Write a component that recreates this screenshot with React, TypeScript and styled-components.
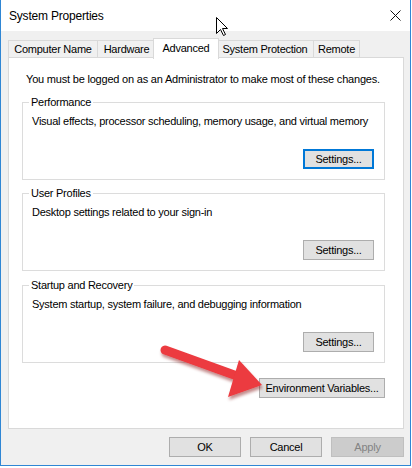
import React from 'react';
import styled, { createGlobalStyle } from 'styled-components';

const GlobalStyle = createGlobalStyle`
  html, body {
    margin: 0;
    padding: 0;
    background: #ffffff;
  }
  body {
    font-family: "Liberation Sans", Arial, sans-serif;
    font-size: 11px;
    color: #000;
  }
`;

const Window = styled.div`
  position: relative;
  box-sizing: border-box;
  width: 411px;
  height: 466px;
  border: 1px solid #2f86d4;
  border-top: none;
  display: flex;
  flex-direction: column;
  background: #f0f0f0;
`;

const TitleBar = styled.div`
  height: 31px;
  flex: none;
  background: #ffffff;
  display: flex;
  align-items: center;
  justify-content: space-between;
  padding: 0 0 0 8px;
`;

const Title = styled.span`
  font-size: 12px;
  letter-spacing: -0.2px;
`;

const CloseButton = styled.div`
  width: 30px;
  height: 31px;
  display: flex;
  align-items: center;
  justify-content: center;
`;

const Body = styled.div`
  flex: 1;
  display: flex;
  flex-direction: column;
  padding: 7px 6px 0 7px;
`;

const TabStrip = styled.div`
  display: flex;
  align-items: flex-end;
  height: 20px;
  position: relative;
  z-index: 1;
`;

const Tab = styled.div<{ $w: number; $active?: boolean; $first?: boolean }>`
  box-sizing: border-box;
  width: ${(p) => p.$w}px;
  height: ${(p) => (p.$active ? 21 : 18)}px;
  margin-left: ${(p) => (p.$first ? 0 : p.$active ? -3 : -1)}px;
  margin-right: ${(p) => (p.$active ? -2 : 0)}px;
  margin-bottom: ${(p) => (p.$active ? -1 : 0)}px;
  border: 1px solid #d9d9d9;
  border-bottom: ${(p) => (p.$active ? 'none' : '1px solid #d9d9d9')};
  background: ${(p) => (p.$active ? '#ffffff' : '#f0f0f0')};
  position: relative;
  z-index: ${(p) => (p.$active ? 2 : 0)};
  display: flex;
  align-items: center;
  justify-content: center;
  padding-bottom: ${(p) => (p.$active ? 2 : 0)}px;
  white-space: nowrap;
  letter-spacing: -0.25px;
`;

const Panel = styled.div`
  box-sizing: border-box;
  height: 372px;
  margin-top: -1px;
  background: #ffffff;
  border: 1px solid #d9d9d9;
  padding: 14px 18px 0 13px;
  display: flex;
  flex-direction: column;
`;

const Intro = styled.div`
  line-height: 14px;
  margin-left: 4px;
  white-space: nowrap;
  letter-spacing: -0.2px;
`;

const Group = styled.fieldset<{ $gap: number }>`
  box-sizing: border-box;
  margin: ${(p) => p.$gap}px 0 0 0;
  padding: 5px 10px 10px 9px;
  height: 85px;
  border: 1px solid #dcdcdc;
  display: flex;
  flex-direction: column;
  min-inline-size: 0;
`;

const Legend = styled.legend`
  padding: 0 2px;
  margin-left: -3px;
  line-height: 14px;
  letter-spacing: -0.25px;
`;

const Desc = styled.div`
  line-height: 14px;
  white-space: nowrap;
  letter-spacing: -0.25px;
`;

const ButtonRow = styled.div<{ $top: number }>`
  display: flex;
  justify-content: flex-end;
  gap: 9px;
  margin-top: ${(p) => p.$top}px;
`;

const Button = styled.div<{ $w: number; $focused?: boolean; $disabled?: boolean }>`
  box-sizing: border-box;
  width: ${(p) => p.$w}px;
  height: 20px;
  display: flex;
  align-items: center;
  justify-content: center;
  background: ${(p) => (p.$disabled ? '#cccccc' : '#e1e1e1')};
  border: 1px solid ${(p) => (p.$focused ? '#0078d7' : p.$disabled ? '#bfbfbf' : '#adadad')};
  box-shadow: ${(p) => (p.$focused ? 'inset 0 0 0 1px #0078d7' : 'none')};
  color: ${(p) => (p.$disabled ? '#838383' : '#000')};
  white-space: nowrap;
  letter-spacing: -0.25px;
`;

const Footer = styled.div`
  display: flex;
  justify-content: flex-end;
  gap: 9px;
  margin-top: 8px;
`;

const Overlay = styled.svg`
  position: absolute;
  left: 0;
  top: 0;
  pointer-events: none;
  overflow: visible;
`;

const groups = [
  {
    title: 'Performance',
    text: 'Visual effects, processor scheduling, memory usage, and virtual memory',
    focused: true,
  },
  { title: 'User Profiles', text: 'Desktop settings related to your sign-in' },
  {
    title: 'Startup and Recovery',
    text: 'System startup, system failure, and debugging information',
  },
];

const tabs = [
  { label: 'Computer Name', w: 90 },
  { label: 'Hardware', w: 59 },
  { label: 'Advanced', w: 66, active: true },
  { label: 'System Protection', w: 98 },
  { label: 'Remote', w: 47 },
];

export default function App() {
  return (
    <>
      <GlobalStyle />
      <Window>
        <TitleBar>
          <Title>System Properties</Title>
          <CloseButton>
            <svg width="11" height="11" viewBox="0 0 11 11">
              <path d="M0.5 0.5 L10.5 10.5 M10.5 0.5 L0.5 10.5" stroke="#111" strokeWidth="1" />
            </svg>
          </CloseButton>
        </TitleBar>
        <Body>
          <TabStrip>
            {tabs.map((t, i) => (
              <Tab key={t.label} $w={t.w} $active={t.active} $first={i === 0}>
                {t.label}
              </Tab>
            ))}
          </TabStrip>
          <Panel>
            <Intro>You must be logged on as an Administrator to make most of these changes.</Intro>
            {groups.map((g, i) => (
              <Group key={g.title} $gap={i === 0 ? 9 : i === 1 ? 6 : 7}>
                <Legend>{g.title}</Legend>
                <Desc>{g.text}</Desc>
                <ButtonRow $top={21}>
                  <Button $w={71} $focused={g.focused}>
                    Settings...
                  </Button>
                </ButtonRow>
              </Group>
            ))}
            <ButtonRow $top={15}>
              <Button $w={126}>Environment Variables...</Button>
            </ButtonRow>
          </Panel>
          <Footer>
            <Button $w={72}>OK</Button>
            <Button $w={72}>Cancel</Button>
            <Button $w={73} $disabled>
              Apply
            </Button>
          </Footer>
        </Body>

        {/* red annotation arrow */}
        <Overlay width="411" height="466">
          <defs>
            <filter id="arrowShadow" x="-20%" y="-20%" width="140%" height="160%">
              <feDropShadow dx="1" dy="3" stdDeviation="1.6" floodColor="#7a0b0b" floodOpacity="0.45" />
            </filter>
          </defs>
          <g filter="url(#arrowShadow)" fill="#ec3a3f">
            <path d="M164 350 L236 376" stroke="#ec3a3f" strokeWidth="9" strokeLinecap="round" />
            <polygon points="238,360 227,397 261,385" />
          </g>
        </Overlay>

        {/* mouse pointer */}
        <Overlay width="411" height="466">
          <path
            d="M215.5 17.5 L215.5 33.5 L219.5 29.5 L222.5 35.5 L224.5 34.5 L221.5 28.5 L226.5 28.5 Z"
            fill="#ffffff"
            stroke="#000000"
            strokeWidth="1"
            strokeLinejoin="miter"
          />
        </Overlay>
      </Window>
    </>
  );
}
